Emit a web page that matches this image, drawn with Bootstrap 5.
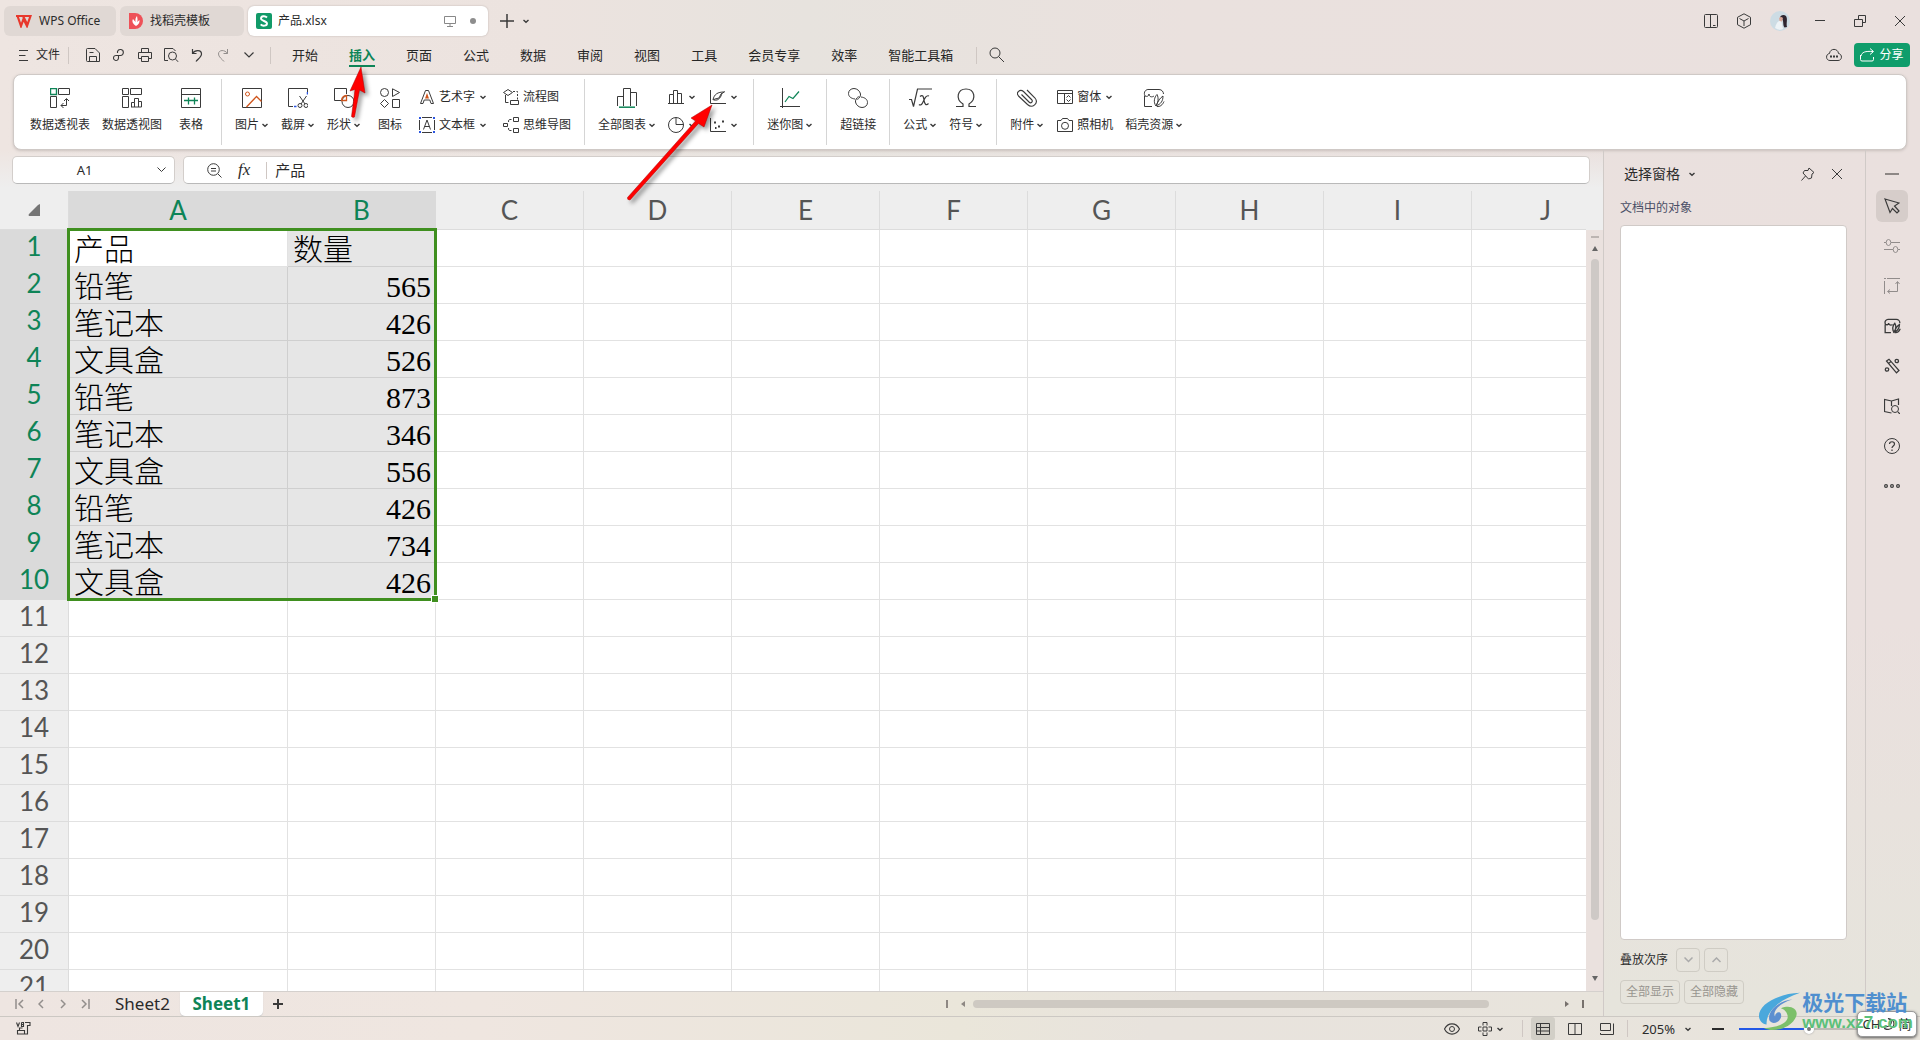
<!DOCTYPE html>
<html lang="zh-CN">
<head>
<meta charset="utf-8">
<meta name="viewport" content="width=device-width, initial-scale=1">
<title>产品.xlsx - WPS Office</title>
<link href="https://cdn.jsdelivr.net/npm/bootstrap@5.3.0/dist/css/bootstrap.min.css" rel="stylesheet">
<style>
:root{--ui:"Noto Sans","Noto Sans CJK SC",sans-serif;--ink:#2b2b2b;--green:#0e8457;--line:#d0cac7}
body{font-family:var(--ui);font-size:12px;line-height:16px;color:var(--ink);overflow:hidden;
 background:linear-gradient(180deg,transparent 60%,#e6e4dc 96%) right/45% 100% no-repeat,linear-gradient(90deg,#eee5e1 0,#ece3df 28%,#e7e3de 42%,#eae1de 62%,#eae0de 100%)}
button,input{font:inherit;color:inherit}
button,.plain-link{background:none;border:0;padding:0;color:inherit;text-decoration:none;white-space:nowrap}
svg{display:block;flex:none}
.ic{fill:none;stroke:#3a3a3a;stroke-width:1}
.g{stroke:#0e8457}.o{stroke:#d0551c}.b{stroke:#2a55e0}
.caret{width:8px;height:8px;fill:none;stroke:#3a3a3a;stroke-width:1.4}
.titlebar{height:40px;padding:6px 0 4px 4px;gap:4px}
.doc-tab{height:30px;border-radius:6px;background:#e0d8d4;padding:0 12px;gap:7px}
.doc-tab.current{background:#fff;width:240px;padding:0 8px;gap:6px;box-shadow:0 0 2px #b9b0ac}
.tab-home{width:112px}.tab-docer{width:124px;padding:0 9px}
.win-btn{width:40px}
.tool-btn{width:33px}
.menubar{height:30px;padding:0 10px 0 19px}
.menubar .menu-item{font-size:13px;line-height:20px;padding:0;color:#262626}
.menu-list{gap:31px;margin-left:21px}
.menu-item.current{color:var(--green)!important;font-weight:700;box-shadow:0 2px 0 #0e8457}
.quick-tools{padding:0 8px 0 11px}
.quick{width:26px;height:24px}
.find-group{gap:12px;margin-left:23px}
.vbar{width:1px;height:17px;background:#cfc7c3}
.share{width:56px;height:24px;border-radius:4px;background:#0f9d6b;color:#fff;gap:4px}
.ribbon{height:76px;margin:4px 13px 0;background:#fff;border:1px solid #cfc9c6;border-radius:8px;box-shadow:0 1px 3px #c9c0bd;padding:0 10px}
.rib-sep{width:1px;height:66px;background:#d5d5d5;margin:0 7px}
.rib-btn{min-width:46px;padding:0 6px 3px;height:48px}
.rib-small{padding:0 6px;gap:4px;height:18px}
.rib-small.icon-only{min-width:42px}
.rib-stack{gap:10px;padding-bottom:2px}
.cap{gap:2px}
.workarea{min-height:0}
.sheet-area{flex:1 1 0;min-width:0;background:linear-gradient(180deg,transparent 0,#eee 38px,#eee 100%)}
.formula-row{height:41px;padding:6px 13px 7px 12px;gap:8px}
.fbox{height:28px;background:#fff;border:1px solid #d3cecb;border-bottom-color:#b9b9b9;border-radius:5px}
.fbox input{border:0;outline:0;background:none;min-width:0}
.name-box{width:163px}
.name-box input{width:100%;text-align:center;font-size:13px;padding-left:9px}
.content-box{padding-left:23px}
.content-box input{font-size:15px}
.fx{font:italic 17px "Liberation Serif",serif}
.sheet-grid{table-layout:fixed;width:1552px;border-collapse:separate;border-spacing:0;background:#fff}
.sheet-grid th{font:400 26px/36px Lato,sans-serif;color:#555;text-align:center;background:#eee;padding:0;border-right:1px solid #dcdcdc;border-bottom:1px solid #dcdcdc}
.sheet-grid thead th{height:39px}
.sheet-grid tbody th{height:37px;padding-bottom:4px;line-height:32px}
.sheet-grid .picked{background:#dadada;color:var(--green);border-color:#dadada}
.sheet-grid td{height:37px;padding:4px 4px 0 5px;border-right:1px solid #e2e2e2;border-bottom:1px solid #e2e2e2;font:300 30px/32px "Liberation Serif","Noto Sans CJK SC",serif;color:#000;white-space:nowrap}
.sheet-grid td.inside{background:#e6e6e6;border-color:#cfcfcf}
.sheet-grid td.amount{text-align:right}
.range-frame{left:67px;top:37px;width:370px;height:373px;border:3px solid #3f8f1f;pointer-events:none}
.range-frame::after{content:"";position:absolute;right:-5px;bottom:-5px;width:6px;height:6px;background:#3f8f1f;border:1px solid #fff;box-sizing:content-box}
.head-spacer{height:39px}
.select-all{margin:0 28px 0 auto}
.v-scroll{width:17px;background:#eae1de;padding:6px 0}
.v-scroll .thumb{width:8px;border-radius:4px;background:#cec9c6}
.sheet-tabs{height:26px;border-top:1px solid #d4d0cd;background:linear-gradient(90deg,#eee5e1 0,#efe6e0 30%,#eae6da 60%,#e8e3dd 75%,#e8e4dc)}
.page-nav{width:22px}
.tab-list{gap:10px;margin-left:19px}
.sheet-tab{font:400 17px/24px "Noto Sans",sans-serif}
.sheet-tab.current{width:83px;height:24px;background:#fff;color:var(--green);font-weight:700;border-radius:0 0 5px 5px;box-shadow:0 1px 1px #ccc}
.h-scroll{width:662px;padding:0 18px 0 0}
.h-scroll .thumb{height:8px;border-radius:4px;background:#cec9c2}
.sel-pane{flex:none;width:262px;border-left:1px solid var(--line);padding:14px 18px 0 16px}
.pane-title{font-size:14px;line-height:20px}
.pane-label{color:#4a4f66}
.object-list{background:#fff;border:1px solid var(--line);border-radius:4px;margin-top:9px}
.ghost{border:1px solid #cfccc4;border-radius:4px;width:60px;height:24px;color:#98958f}
.ghost.order{width:24px}
.side-rail{flex:none;width:55px;border-left:1px solid var(--line);padding:16px 2px 0 0}
.rail-btn{width:32px;height:32px;border-radius:6px}
.rail-btn.fold{height:16px}
.rail-btn.current{background:#d6cdca}
.statusbar{height:24px;border-top:1px solid #ccc8c3;padding:0 41px 0 16px;background:linear-gradient(90deg,#eee5e1 0,#efe6e0 25%,#eae6da 50%,#e8e3dd 60%,#e8e4dc)}
.view-tools{gap:18px}
.view-btn{width:32px;height:23px}
.view-btn.current span{background:#d2cfc7;width:24px;height:23px;border-radius:3px}
.view-modes{padding:0 4px}
.zoom-tools{gap:15px;padding-left:14px}
.zoom-value{font-size:13px;gap:9px;padding-right:5px}
.zoom-range{appearance:none;width:140px;height:14px;background:linear-gradient(90deg,#2458e6 50%,#bdbab4 50%) center/100% 2px no-repeat}
.zoom-range::-webkit-slider-thumb{appearance:none;width:10px;height:10px;border-radius:50%;background:#777;border:3px solid #fff;box-shadow:0 0 2px #999}
.callout-layer{left:0;top:0;pointer-events:none;filter:drop-shadow(3px 3px 2px #0006)}
.site-mark{right:7px;bottom:7px;z-index:2;pointer-events:none}
.site-name{font:700 21px/24px "Noto Sans CJK SC",sans-serif;color:#4f8fcf}
.site-url{font:700 17px/20px "Liberation Sans",sans-serif;color:#5cc07a}
.ime{right:3px;bottom:3px;width:60px;height:26px;background:#fff;border:1px solid #999;border-radius:5px;box-shadow:0 1px 3px #555;font-size:13px;z-index:1;gap:3px}
</style>
<script src="https://cdn.jsdelivr.net/npm/bootstrap@5.3.0/dist/js/bootstrap.bundle.min.js"></script>
</head>
<body class="vh-100 d-flex flex-column position-relative">
<svg width="0" height="0" class="position-absolute"><defs>
<symbol id="dn" viewBox="0 0 8 8"><path d="M1.500 3 4 5.300 6.500 3"/></symbol>
<symbol id="docer" viewBox="0 0 22 20"><path d="M1.500 8V18.500H9M2 8C0 4 3 1 6 1.500H16C19 1.500 20.500 4 20.500 6M2 8C4 9 6 8 6 6C6 9 9 9.500 11 8M13 18C10 14 11.500 9 14 6.500C16 10 15 15 13 18ZM13 18C15 13 17 10 20 8C20 13 18 16 13 18ZM14 18.500C17 19 19.500 17 21 13.500"/></symbol>
</defs></svg>

<header>
<div class="titlebar d-flex align-items-center">
 <button class="doc-tab tab-home d-flex align-items-center"><svg width="16" height="14" viewBox="0 0 16 14" fill="none" stroke="#e8382c" stroke-width="2.200"><path d="M0 2H14.500L11 12L7.500 5L5 12L1.500 2M7 2 11 10"/></svg>WPS Office</button>
 <button class="doc-tab tab-docer d-flex align-items-center"><svg width="14" height="16" viewBox="0 0 14 16"><path d="M0 0H6A8 8 0 0 1 6 16H0Z" fill="#ee5158"/><path d="M7 13C3 10 3 8 4 6L6.500 9C6 6 7 4 8 3C8.500 6 9 7 8 9L10.500 7C11 10 9 12 7 13Z" fill="#fff"/></svg>找稻壳模板</button>
 <button class="doc-tab current d-flex align-items-center"><svg width="16" height="16" viewBox="0 0 16 16"><rect width="16" height="16" rx="2" fill="#119a68"/><path d="M11 4.500C9 2.500 5 3 5 5.500S11 8 11 10.500S6.500 13.500 4.700 11.300" fill="none" stroke="#fff" stroke-width="1.900"/></svg><span>产品.xlsx</span>
  <svg class="ms-auto me-1" width="12" height="12" viewBox="0 0 12 12" fill="none" stroke="#888"><path d="M.5 1.500H11.500V8.500H.5ZM6 8.500V11M3 11.500H9"/></svg><svg class="ms-1 me-1" width="6" height="6"><circle cx="3" cy="3" r="3" fill="#8d8d8d"/></svg></button>
 <button class="ms-2" aria-label="新建"><svg class="ic" width="14" height="14" viewBox="0 0 14 14"><path d="M7 0V14M0 7H14" stroke-width="1.500"/></svg></button>
 <button class="ms-1" aria-label="标签列表"><svg class="caret"><use href="#dn"/></svg></button>
 <div class="ms-auto d-flex align-items-center">
  <button class="tool-btn d-flex justify-content-center" aria-label="手机"><svg class="ic" width="16" height="16" viewBox="0 0 16 16"><rect x="1.500" y="1.500" width="13" height="13" rx="1"/><path d="M7.500 1.500V14.500M10 12.500H12.500"/></svg></button>
  <button class="tool-btn d-flex justify-content-center" aria-label="应用"><svg class="ic" width="16" height="16" viewBox="0 0 16 16"><path d="M8 .8 14.500 4.300V11.700L8 15.200 1.500 11.700V4.300ZM3.500 5.500 8 8 12.500 5.500M8 8V13"/></svg></button>
  <button class="win-btn d-flex justify-content-center" aria-label="账号"><svg width="20" height="20" viewBox="0 0 20 20"><circle cx="10" cy="10" r="10" fill="#cddce4"/><path d="M5 17C6 12 8 10 11 9L13 18Q9 20 5 17Z" fill="#eef3f6"/><path d="M10 7C10 4 14 3 16 5C18 8 16 12 17 16L14.500 16.500C12.500 14 14 10 12 8Z" fill="#2f2630"/><path d="M9 7Q11 5 13 7L12 10.500 9.500 10Z" fill="#d9a99a"/></svg></button>
  <button class="win-btn d-flex justify-content-center" aria-label="最小化"><svg class="ic" width="12" height="12" viewBox="0 0 12 12"><path d="M1 5.500H11"/></svg></button>
  <button class="win-btn d-flex justify-content-center" aria-label="还原"><svg class="ic" width="12" height="12" viewBox="0 0 12 12"><path d="M.5 4.500H8.500V11.500H.5ZM4.500 4.500V.5H11.500V7.500H8.500"/></svg></button>
  <button class="win-btn d-flex justify-content-center" aria-label="关闭"><svg class="ic" width="12" height="12" viewBox="0 0 12 12"><path d="M1 1 11 11M11 1 1 11"/></svg></button>
 </div>
</div>

<div class="menubar d-flex align-items-center">
 <button class="d-flex align-items-center gap-2"><svg class="ic" width="9" height="12" viewBox="0 0 9 12"><path d="M0 1.500H9M0 6.500H6.500M0 11.500H9"/></svg>文件</button>
 <span class="vbar ms-2"></span>
 <div class="quick-tools d-flex">
 <button class="quick d-flex align-items-center justify-content-center" aria-label="保存"><svg class="ic" width="14" height="14" viewBox="0 0 14 14"><path d="M.5 1.500Q.5.5 1.500.5H9L13.500 5V13.500H1.500Q.5 13.500.5 12.500ZM3.500 13.500V8.500H10.500V13.500M3.500 4.500H7.500"/></svg></button>
 <button class="quick d-flex align-items-center justify-content-center" aria-label="输出"><svg class="ic" width="12" height="14" viewBox="0 0 12 14"><path d="M4.500 5V3.500A3 3 0 1 1 7.500 7.500H3.500A2.500 2.500 0 1 0 5.500 10V7.500" stroke-width="1.100"/></svg></button>
 <button class="quick d-flex align-items-center justify-content-center" aria-label="打印"><svg class="ic" width="14" height="14" viewBox="0 0 14 14"><path d="M3.500 4.500V.5H10.500V4.500M3.500 10.500H.5V4.500H13.500V10.500H10.500M3.500 8.500H10.500V13.500H3.500Z"/></svg></button>
 <button class="quick d-flex align-items-center justify-content-center" aria-label="打印预览"><svg class="ic" width="15" height="14" viewBox="0 0 15 14"><path d="M4 12.500H.5V.5H9L11.500 3M11.500 11.200 14.500 14"/><circle cx="8.500" cy="8" r="4"/></svg></button>
 <button class="quick d-flex align-items-center justify-content-center" aria-label="撤销"><svg class="ic" width="12" height="13" viewBox="0 0 12 13"><path d="M1.500 0V4.500H5.500M1.500 4.500C4 .5 10.500.5 10.500 5C10.500 8 7 10 5 12.500" stroke-width="1.200"/></svg></button>
 <button class="quick d-flex align-items-center justify-content-center opacity-50" aria-label="恢复"><svg class="ic" width="12" height="13" viewBox="0 0 12 13"><path d="M10.500 0V4.500H6.500M10.500 4.500C8 .5 1.500.5 1.500 5C1.500 8 5 10 7 12.500"/></svg></button>
 <button class="quick d-flex align-items-center justify-content-center" aria-label="更多"><svg class="ic" width="10" height="6" viewBox="0 0 10 6"><path d="M.5.5 5 5 9.500.5" stroke-width="1.200"/></svg></button>
 </div>
 <span class="vbar"></span>
 <nav class="menu-list d-flex">
  <a class="menu-item plain-link" href="#">开始</a><a class="menu-item plain-link current" href="#">插入</a><a class="menu-item plain-link" href="#">页面</a><a class="menu-item plain-link" href="#">公式</a><a class="menu-item plain-link" href="#">数据</a><a class="menu-item plain-link" href="#">审阅</a><a class="menu-item plain-link" href="#">视图</a><a class="menu-item plain-link" href="#">工具</a><a class="menu-item plain-link" href="#">会员专享</a><a class="menu-item plain-link" href="#">效率</a><a class="menu-item plain-link" href="#">智能工具箱</a>
 </nav>
 <div class="find-group d-flex align-items-center"><span class="vbar"></span>
 <button aria-label="搜索"><svg class="ic" width="16" height="16" viewBox="0 0 16 16"><circle cx="6" cy="6" r="5"/><path d="M9.500 9.500 15 15"/></svg></button></div>
 <div class="ms-auto d-flex align-items-center gap-2">
  <button class="me-1" aria-label="云端"><svg class="ic" width="16" height="14" viewBox="0 0 16 14"><path d="M4 12.500C-.5 12.500-.5 6 3.500 5.500C4 0 12 0 12.500 5.500C16.500 6 16.500 12.500 12 12.500Z"/><path d="M4 8.500H6M7 8.500H9M10 8.500H12" stroke-width="2"/></svg></button>
  <button class="share d-flex align-items-center justify-content-center"><svg width="15" height="14" viewBox="0 0 15 14" fill="none" stroke="#fff"><path d="M.5 7V11.500Q.5 13 2 13H12Q13.500 13 13.500 11.500V9M1 8C2 4 5 3 13 3.500M10 .5 13.500 3.500 10 6.500"/></svg>分享</button>
 </div>
</div>

<div class="ribbon d-flex align-items-center">
 <button class="rib-btn d-flex flex-column align-items-center justify-content-between"><svg class="ic" width="20" height="20" viewBox="0 0 20 20"><path d="M8.500.5H19.500V6.500H8.500ZM.5 8.500H6.500V19.500H.5ZM11 17.500H16.500V11M13.500 15 11 17.500 13.500 20M14 13 16.500 10.500 19 13"/><path class="g" d="M.5.5H6.500V6.500H.5Z" stroke-width="1.400"/></svg>数据透视表</button>
 <button class="rib-btn d-flex flex-column align-items-center justify-content-between"><svg class="ic" width="20" height="20" viewBox="0 0 20 20"><path d="M.5.5H6.500V6.500H.5ZM8.500.5H19.500V6.500H8.500ZM.5 8.500H6.500V19.500H.5ZM9.500 19V14.500H12.500V19M12.500 14.500V10.500H16.500V19M16.500 13.500H19.500V19H9"/></svg>数据透视图</button>
 <button class="rib-btn d-flex flex-column align-items-center justify-content-between"><svg class="ic" width="20" height="20" viewBox="0 0 20 20"><path d="M.5.5H19.500V19.500H.5ZM.5 6.500H19.500"/><path class="g" d="M3 12.500H17M7.500 9.500V16.500M13.500 9.500V16.500" stroke-width="1.300"/></svg>表格</button>
 <span class="rib-sep"></span>
 <button class="rib-btn d-flex flex-column align-items-center justify-content-between"><svg class="ic" width="20" height="20" viewBox="0 0 20 20"><path d="M.5.5H19.500V19.500H.5Z"/><path class="o" d="M4.500 19 14.500 8.500 19.500 13.500" stroke-width="1.300"/><circle class="o" cx="5.500" cy="6" r="2"/></svg><span class="cap d-flex align-items-center">图片<svg class="caret"><use href="#dn"/></svg></span></button>
 <button class="rib-btn d-flex flex-column align-items-center justify-content-between"><svg class="ic" width="20" height="20" viewBox="0 0 20 20"><path d="M5 18.500H.5V.5H19.500V4M11.500 8 17 16M18.500 8 13 16"/><path class="b" d="M19.500 4V6.500M6 18.500H8.500" stroke-width="1.500"/><circle cx="12" cy="17.500" r="2"/><circle cx="18" cy="17.500" r="2"/></svg><span class="cap d-flex align-items-center">截屏<svg class="caret"><use href="#dn"/></svg></span></button>
 <button class="rib-btn d-flex flex-column align-items-center justify-content-between"><svg class="ic" width="20" height="20" viewBox="0 0 20 20"><path d="M8 12.500H.5V.5H12.500V6"/><circle cx="14" cy="13.500" r="6"/><path class="o" d="M7.500 12.500H12.500V7.500Q8 8 7.500 12.500Z" stroke-width="1.300"/></svg><span class="cap d-flex align-items-center">形状<svg class="caret"><use href="#dn"/></svg></span></button>
 <button class="rib-btn d-flex flex-column align-items-center justify-content-between"><svg class="ic" width="20" height="20" viewBox="0 0 20 20"><circle cx="4.500" cy="4.500" r="4"/><path d="M12.500.8 19.500 4.500 12.500 8.500ZM4.500 11.500 8.500 15.500 4.500 19.500.5 15.500ZM12.500 11.500H19.500V19.500H12.500Z"/></svg>图标</button>
 <div class="rib-stack d-flex flex-column">
  <button class="rib-small d-flex align-items-center"><svg class="ic" width="16" height="16" viewBox="0 0 16 16"><path d="M1.500 14.500 6.500 1.500H9.500L14.500 14.500H12L10.800 11H5.200L4 14.500Z"/><path d="M6 9.500 8 4 10 9.500Z" fill="#d0551c" stroke="none"/></svg>艺术字<svg class="caret"><use href="#dn"/></svg></button>
  <button class="rib-small d-flex align-items-center"><svg class="ic" width="16" height="16" viewBox="0 0 16 16"><path d="M3 .5H13M3 15.500H13M.5 3V13M15.500 3V13M4.500 12.500 8 3 11.500 12.500M5.700 9.500H10.300"/><path d="M0 0H2V2H0ZM14 0H16V2H14ZM0 14H2V16H0ZM14 14H16V16H14Z" fill="#2a55e0" stroke="none"/></svg>文本框<svg class="caret"><use href="#dn"/></svg></button>
 </div>
 <div class="rib-stack d-flex flex-column ms-1">
  <button class="rib-small d-flex align-items-center"><svg class="ic" width="16" height="16" viewBox="0 0 16 16"><path d="M5 .5 9.500 3.500 5 6.500.5 3.500ZM7.500 11.500H15.500V15.500H7.500ZM2.500 6V13.500H5.500"/><path d="M10 2.500H14.500V11" stroke-dasharray="2 1.500"/></svg>流程图</button>
  <button class="rib-small d-flex align-items-center"><svg class="ic" width="16" height="16" viewBox="0 0 16 16"><path d="M.5 6.500H4.500V9.500H.5ZM10.500.5H15.500V4.500H10.500ZM10.500 11.500H15.500V15.500H10.500ZM8.500 2.500H6.500Q5.500 2.500 5.500 5M5.500 11Q5.500 13.500 6.500 13.500H8.500"/></svg>思维导图</button>
 </div>
 <span class="rib-sep"></span>
 <button class="rib-btn d-flex flex-column align-items-center justify-content-between"><svg class="ic" width="20" height="20" viewBox="0 0 20 20"><path d="M.5 18V8.500H6.500M6.500 18V.5H13.500V18M13.500 4.500H19.500V18"/><path class="g" d="M2 19.200H18" stroke-width="1.500"/></svg><span class="cap d-flex align-items-center">全部图表<svg class="caret"><use href="#dn"/></svg></span></button>
 <div class="rib-stack d-flex flex-column">
  <button class="rib-small icon-only d-flex align-items-center" aria-label="柱形图"><svg class="ic" width="16" height="16" viewBox="0 0 16 16"><path d="M0 14.500H16M1.500 14V5.500H5.500V14M5.500 5.500V1.500H9.500V14M9.500 4.500H13.500V14"/></svg><svg class="caret"><use href="#dn"/></svg></button>
  <button class="rib-small icon-only d-flex align-items-center" aria-label="饼图"><svg class="ic" width="16" height="16" viewBox="0 0 16 16"><circle cx="8" cy="8" r="7.500"/><path d="M8 .5V7.500H15.500"/></svg><svg class="caret"><use href="#dn"/></svg></button>
 </div>
 <div class="rib-stack d-flex flex-column">
  <button class="rib-small icon-only d-flex align-items-center" aria-label="折线图"><svg class="ic" width="16" height="16" viewBox="0 0 16 16"><path d="M.5 1V14.500H16M3 11 5 10 9 9 11 5 15 2.500M3 11C4 5 8 3 14 3M4 11C9 12 11 8 12 4"/></svg><svg class="caret"><use href="#dn"/></svg></button>
  <button class="rib-small icon-only d-flex align-items-center" aria-label="散点图"><svg class="ic" width="16" height="16" viewBox="0 0 16 16"><path d="M.5 1V14.500H16"/><path d="M4 5.500H6M8 9.500H10M12 4.500H14M5 11H6.500" stroke-width="2"/></svg><svg class="caret"><use href="#dn"/></svg></button>
 </div>
 <span class="rib-sep"></span>
 <button class="rib-btn d-flex flex-column align-items-center justify-content-between"><svg class="ic" width="20" height="20" viewBox="0 0 20 20"><path d="M2.500 0V20M0 18.500H20"/><path class="g" d="M5 14 9 8.500 13 10.500 19 3.500" stroke-width="1.200"/></svg><span class="cap d-flex align-items-center">迷你图<svg class="caret"><use href="#dn"/></svg></span></button>
 <span class="rib-sep"></span>
 <button class="rib-btn d-flex flex-column align-items-center justify-content-between"><svg class="ic" width="20" height="20" viewBox="0 0 20 20"><path d="M7 11C3 10.500.5 8.500.5 5.500C.5 2.500 3 .5 6 .5C9 .5 12 3 12.500 6C12.800 9 10 12 8.500 11M13 9C17 9.500 19.500 11.500 19.500 14.500C19.500 17.500 17 19.500 14 19.500C11 19.500 8 17 7.500 14C7.200 11 10 8 11.500 9"/></svg>超链接</button>
 <span class="rib-sep"></span>
 <button class="rib-btn d-flex flex-column align-items-center justify-content-between"><svg class="ic" width="24" height="20" viewBox="0 0 24 20"><path d="M1 11.500H3.500L5.500 18.500 9.500 1H24M12 8.500C15 6 15.500 9 16 12C16.500 16 18 18 20.500 15.500M21 8C18 6.500 16 12 14.500 15C13.500 17 12 17.500 11 16.500" stroke-width="1.200"/></svg><span class="cap d-flex align-items-center">公式<svg class="caret"><use href="#dn"/></svg></span></button>
 <button class="rib-btn d-flex flex-column align-items-center justify-content-between"><svg class="ic" width="20" height="20" viewBox="0 0 20 20"><path d="M0 18.500H7V16C-1 11 1.500 1 10 1S21 11 13 16V18.500H20" stroke-width="1.200"/></svg><span class="cap d-flex align-items-center">符号<svg class="caret"><use href="#dn"/></svg></span></button>
 <span class="rib-sep"></span>
 <button class="rib-btn d-flex flex-column align-items-center justify-content-between"><svg class="ic" width="20" height="20" viewBox="0 0 20 20"><path d="M4.500 6.500 12 14C14 16 16.500 13.500 14.500 11.500L6.500 3.500C3 .5-1.500 4.500 1.500 8L10.500 16.500C15.500 21 22 15 18 10L10 2" stroke-width="1.100"/></svg><span class="cap d-flex align-items-center">附件<svg class="caret"><use href="#dn"/></svg></span></button>
 <div class="rib-stack d-flex flex-column">
  <button class="rib-small d-flex align-items-center"><svg class="ic" width="17" height="16" viewBox="0 0 17 16"><path d="M1.500 1.500H16.500V14.500H1.500ZM1.500 4.500H16.500M8.500 4.500V14.500M10.500 8.500 12.500 6.500 14.500 8.500M10.500 10.500 12.500 12.500 14.500 10.500"/></svg>窗体<svg class="caret"><use href="#dn"/></svg></button>
  <button class="rib-small d-flex align-items-center"><svg class="ic" width="17" height="16" viewBox="0 0 17 16"><path d="M1.500 3.500H5L6.500 1.500H11.500L13 3.500H16.500V14.500H1.500Z"/><circle cx="9" cy="8.800" r="3.500"/></svg>照相机</button>
 </div>
 <button class="rib-btn d-flex flex-column align-items-center justify-content-between"><svg class="ic" width="22" height="20"><use href="#docer"/></svg><span class="cap d-flex align-items-center">稻壳资源<svg class="caret"><use href="#dn"/></svg></span></button>
</div>
</header>

<main class="workarea flex-grow-1 d-flex">
 <section class="sheet-area d-flex flex-column overflow-hidden">
  <div class="formula-row d-flex">
   <div class="fbox name-box d-flex align-items-center"><input value="A1" aria-label="名称框"><button class="px-2" aria-label="展开名称框"><svg class="ic" width="9" height="6" viewBox="0 0 9 6"><path d="M.5.5 4.500 4.500 8.500.5"/></svg></button></div>
   <div class="fbox content-box flex-grow-1 d-flex align-items-center"><svg class="ic" width="15" height="15" viewBox="0 0 15 15"><circle cx="6.500" cy="6.500" r="5.800"/><path d="M11 11 14.500 14.500M4 5.500H9M4 8H9"/></svg>
    <button class="fx ms-3" aria-label="插入函数">fx</button><span class="vbar ms-3 me-2"></span><input class="flex-grow-1 p-0" value="产品" aria-label="编辑栏"></div>
  </div>
  <div class="flex-grow-1 d-flex overflow-hidden">
   <div class="flex-grow-1 overflow-hidden position-relative">
    <table class="sheet-grid"><colgroup><col style="width:69px"><col style="width:219px"><col span="9" style="width:148px"></colgroup><thead><tr id="letters"></tr></thead><tbody id="cells"></tbody></table>
    <div class="range-frame position-absolute"></div>
   </div>
   <div class="d-flex flex-column">
    <div class="head-spacer"></div>
    <div class="v-scroll flex-grow-1 d-flex flex-column align-items-center"><svg width="8" height="2"><rect width="8" height="2" fill="#bcb5b2"/></svg>
     <svg class="mt-2" width="6" height="5"><path d="M0 5 3 0 6 5Z" fill="#666"/></svg><div class="thumb flex-grow-1 mt-2 mb-5"></div><svg class="mt-2 mb-1" width="6" height="5"><path d="M0 0 3 5 6 0Z" fill="#666"/></svg></div>
   </div>
  </div>
  <div class="sheet-tabs d-flex align-items-start">
   <div class="d-flex ps-2 h-100 align-items-center">
    <button class="page-nav d-flex justify-content-center" aria-label="首张"><svg class="ic" width="9" height="10" viewBox="0 0 9 10" opacity=".5"><path d="M1 0V10M8 1 4 5 8 9" stroke-width="1.500"/></svg></button>
    <button class="page-nav d-flex justify-content-center" aria-label="上一张"><svg class="ic" width="6" height="10" viewBox="0 0 6 10" opacity=".5"><path d="M5 1 1 5 5 9" stroke-width="1.500"/></svg></button>
    <button class="page-nav d-flex justify-content-center" aria-label="下一张"><svg class="ic" width="6" height="10" viewBox="0 0 6 10" opacity=".5"><path d="M1 1 5 5 1 9" stroke-width="1.500"/></svg></button>
    <button class="page-nav d-flex justify-content-center" aria-label="末张"><svg class="ic" width="9" height="10" viewBox="0 0 9 10" opacity=".5"><path d="M8 0V10M1 1 5 5 1 9" stroke-width="1.500"/></svg></button>
   </div>
   <div class="tab-list d-flex align-items-center">
   <button class="sheet-tab">Sheet2</button><button class="sheet-tab current">Sheet1</button>
   <button aria-label="新建工作表"><svg class="ic" width="10" height="10" viewBox="0 0 10 10"><path d="M5 0V10M0 5H10" stroke-width="2"/></svg></button></div>
   <div class="h-scroll ms-auto h-100 d-flex align-items-center"><svg width="24" height="8"><path d="M5 0H7V8H5ZM24 1V7L20 4Z" fill="#77716d" fill-opacity=".8"/></svg><div class="thumb flex-grow-1 ms-2 me-5"></div><svg class="ms-4" width="24" height="8"><path d="M4 1V7L8 4ZM21 0H23V8H21Z" fill="#77716d"/></svg></div>
  </div>
 </section>
 <aside class="sel-pane d-flex flex-column">
  <div class="pane-title d-flex align-items-center ps-1">选择窗格<svg class="caret ms-2"><use href="#dn"/></svg>
   <button class="ms-auto" aria-label="固定"><svg class="ic" width="14" height="14" viewBox="0 0 14 14"><path d="M8 1 13 5.500 11 7 10.500 11 7.500 12 2 6 3.500 3.500 7 3.500ZM4.500 9 .5 13.500"/></svg></button>
   <button class="ms-3 me-1" aria-label="关闭窗格"><svg class="ic" width="12" height="12" viewBox="0 0 12 12"><path d="M1 1 11 11M11 1 1 11"/></svg></button></div>
  <div class="pane-label mt-3">文档中的对象</div>
  <div class="object-list flex-grow-1"></div>
  <div class="d-flex align-items-center gap-1 mt-2"><span class="me-1">叠放次序</span>
   <button class="ghost order d-flex align-items-center justify-content-center" aria-label="下移"><svg width="9" height="6" viewBox="0 0 9 6" fill="none" stroke="#aaa" stroke-width="1.500"><path d="M.5.5 4.500 4.500 8.500.5"/></svg></button>
   <button class="ghost order d-flex align-items-center justify-content-center" aria-label="上移"><svg width="9" height="6" viewBox="0 0 9 6" fill="none" stroke="#aaa" stroke-width="1.500"><path d="M.5 5 4.500 1 8.500 5"/></svg></button></div>
  <div class="d-flex gap-1 mt-2 pb-2 mb-1"><button class="ghost">全部显示</button><button class="ghost">全部隐藏</button></div>
 </aside>
 <nav class="side-rail d-flex flex-column align-items-center gap-2">
  <button class="rail-btn fold d-flex align-items-center justify-content-center" aria-label="收起"><svg width="14" height="2"><rect width="14" height="2" fill="#8d8785"/></svg></button>
  <button class="rail-btn current d-flex align-items-center justify-content-center" aria-label="选择"><svg class="ic" width="16" height="16" viewBox="0 0 16 16"><path d="M1 1 15 5 10.500 8 15 13 13 15 8.500 10.500 6 14.500Z" stroke-width="1.200"/></svg></button>
  <button class="rail-btn d-flex align-items-center justify-content-center opacity-50" aria-label="属性"><svg class="ic" width="16" height="16" viewBox="0 0 16 16"><path d="M0 4.500H2M7 4.500H16M0 11.500H9M14 11.500H16"/><ellipse cx="4.500" cy="4.500" rx="2.300" ry="3"/><ellipse cx="11.500" cy="11.500" rx="2.300" ry="3"/></svg></button>
  <button class="rail-btn d-flex align-items-center justify-content-center opacity-50" aria-label="透视"><svg class="ic" width="16" height="16" viewBox="0 0 16 16"><path d="M3 .5H16M.5 3V16M0 .5H2M4 13.500H13.500V4M6 11.500 3.500 13.500 6 15.500M11.500 6 13.500 3.500 15.500 6"/></svg></button>
  <button class="rail-btn d-flex align-items-center justify-content-center" aria-label="稻壳"><svg class="ic" width="17" height="16" viewBox="0 0 22 20"><g stroke-width="1.700"><path d="M1.500 8V18.500H9M2 8C0 4 3 1 6 1.500H16C19 1.500 20.500 4 20.500 6M2 8C4 9 6 8 6 6C6 9 9 9.500 11 8M13 18C10 14 11.500 9 14 6.500C16 10 15 15 13 18ZM13 18C15 13 17 10 20 8C20 13 18 16 13 18ZM14 18.500C17 19 19.500 17 21 13.500"/></g></svg></button>
  <button class="rail-btn d-flex align-items-center justify-content-center" aria-label="工具"><svg class="ic" width="16" height="16" viewBox="0 0 16 16"><path d="M2.500 3 5 1.200 15 12.500 12.500 14.800ZM4.500 5.500 7 3.500" stroke-width="1.200"/><circle cx="12.800" cy="3" r="1.700" stroke-width="1.300"/><circle cx="3" cy="11.500" r="1.700" stroke-width="1.300"/></svg></button>
  <button class="rail-btn d-flex align-items-center justify-content-center" aria-label="查找"><svg class="ic" width="16" height="16" viewBox="0 0 16 16"><path d="M7.500 15 5 14.500.5 13.500V1.500L7.500 3 14.500 1V7M7.500 3V8M14 14 16 16" stroke-width="1.200"/><circle cx="11" cy="11" r="3.500"/></svg></button>
  <button class="rail-btn d-flex align-items-center justify-content-center" aria-label="帮助"><svg class="ic" width="16" height="16" viewBox="0 0 16 16"><circle cx="8" cy="8" r="7.500"/><path d="M5.500 6C5.500 3 10.500 3 10.500 6C10.500 8 8 8 8 10M8 11.500V13" stroke-width="1.200"/></svg></button>
  <button class="rail-btn d-flex align-items-center justify-content-center" aria-label="更多"><svg class="ic" width="16" height="6" viewBox="0 0 16 6"><g stroke-width="1.200"><circle cx="2" cy="3" r="1.400"/><circle cx="8" cy="3" r="1.400"/><circle cx="14" cy="3" r="1.400"/></g></svg></button>
 </nav>
</main>

<footer class="statusbar d-flex align-items-center">
 <svg class="ic" width="15" height="13" viewBox="0 0 15 13"><path d="M.5.5 2 4.500 3.500.5M5.500.5V4.500H7.500V.5H5.500M5.500 2.500H7.500M9 .5H14V3.500H11.500V12H1.500V8.500H8.500V12M3.500 8V6H6.500" stroke-width="1.100"/></svg>
 <div class="view-tools ms-auto d-flex align-items-center">
  <button aria-label="护眼"><svg class="ic" width="16" height="12" viewBox="0 0 16 12"><path d="M.5 6C4-.8 12-.8 15.500 6C12 12.800 4 12.800.5 6Z" stroke-width="1.100"/><circle cx="8" cy="6" r="2.500"/></svg></button>
  <button class="d-flex align-items-center gap-1" aria-label="定位"><svg class="ic" width="14" height="14" viewBox="0 0 14 14"><path d="M5 3.500V.5H9V3.500M5 10.500V13.500H9V10.500M3.500 5H.5V9H3.500M10.500 5H13.500V9H10.500M5 5H9V9H5Z"/></svg><svg class="caret"><use href="#dn"/></svg></button>
  <span class="vbar"></span>
 </div>
 <div class="view-modes d-flex">
  <button class="view-btn current d-flex justify-content-center" aria-label="普通视图"><span class="d-flex align-items-center justify-content-center"><svg class="ic" width="14" height="12" viewBox="0 0 14 12"><path d="M.5.5H13.500V11.500H.5ZM.5 4.500H13.500M.5 8H13.500M4.500.5V11.500"/></svg></span></button>
  <button class="view-btn d-flex align-items-center justify-content-center" aria-label="分页预览"><svg class="ic" width="14" height="12" viewBox="0 0 14 12"><path d="M.5.5H13.500V11.500H.5ZM7 .5V11.500"/></svg></button>
  <button class="view-btn d-flex align-items-center justify-content-center" aria-label="阅读模式"><svg class="ic" width="14" height="12" viewBox="0 0 14 12"><path d="M.5.5H10.500V7.500H.5ZM13.500.5V11.500H.5V10"/></svg></button>
 </div>
 <span class="vbar"></span>
 <div class="zoom-tools d-flex align-items-center">
  <button class="zoom-value d-flex align-items-center">205%<svg class="caret"><use href="#dn"/></svg></button>
  <button aria-label="缩小"><svg width="12" height="2"><rect width="12" height="2" fill="#2b2b2b"/></svg></button>
  <input class="zoom-range" type="range" min="0" max="100" value="50" aria-label="缩放比例">
 </div>
</footer>

<div class="site-mark position-absolute d-flex align-items-end">
 <svg width="44" height="42" viewBox="0 0 46 42"><path d="M44 1C20 2 1 13 1 25C1 30 5 34 9 34C8 22 20 9 44 1Z" fill="#4aa8dc"/><path d="M36 8C22 9 9 20 12 30C16 36 26 30 24 23C22 19 17 23 18 26C14 20 24 11 36 8Z" fill="#5d8fd0"/><path d="M24 17C36 12 45 20 38 29C33 37 18 43 6 38C22 37 32 32 31 25C30 20 27 18 24 17Z" fill="#7cc06a"/></svg>
 <div><div class="site-name">极光下载站</div><div class="site-url">www.xz7.com</div></div>
</div>
<div class="ime position-absolute d-flex align-items-center justify-content-center"><span>CH</span><svg class="ic" width="12" height="12" viewBox="0 0 12 12"><path d="M5 .5C10 2 9.500 9 1 9C2 13 10 12 11 6C11 3 8 1 5 .5Z" stroke-width="1.200"/></svg><span>简</span></div>

<svg class="callout-layer position-absolute" width="740" height="210" viewBox="0 0 740 210"><g fill="#f00" stroke="#a00" stroke-width=".5"><path d="M361 67 365 93 359.500 90 354.500 117Q353 118 351.500 116.500L355 89.500 350 91Z"/><path d="M712 105 704 127 698.500 123.500 630 200Q627 200 627.500 197.500L695.500 121 691 118Z"/></g></svg>

<script>
const goods=[["产品","数量"],["铅笔",565],["笔记本",426],["文具盒",526],["铅笔",873],["笔记本",346],["文具盒",556],["铅笔",426],["笔记本",734],["文具盒",426]];
const letters="ABCDEFGHIJ".split("");
document.getElementById("letters").innerHTML='<th aria-label="全选"><svg class="select-all" width="12" height="12"><path d="M12 0V12H1Q0 11 1 10L10 1Z" fill="#757575"/></svg></th>'+letters.map((c,i)=>`<th scope="col" class="${i<2?"picked":""}">${c}</th>`).join("");
let rows="";
for(let r=1;r<=21;r++){
 rows+=`<tr><th scope="row" class="${r<=10?"picked":""}">${r}</th>`+letters.map((c,i)=>{
  const used=r<=10&&i<2,v=used?goods[r-1][i]:"";
  return `<td class="${used&&!(r===1&&i===0)?"inside":""}${typeof v==="number"?" amount":""}">${v}</td>`;
 }).join("")+"</tr>";
}
document.getElementById("cells").innerHTML=rows;
</script>
</body>
</html>
